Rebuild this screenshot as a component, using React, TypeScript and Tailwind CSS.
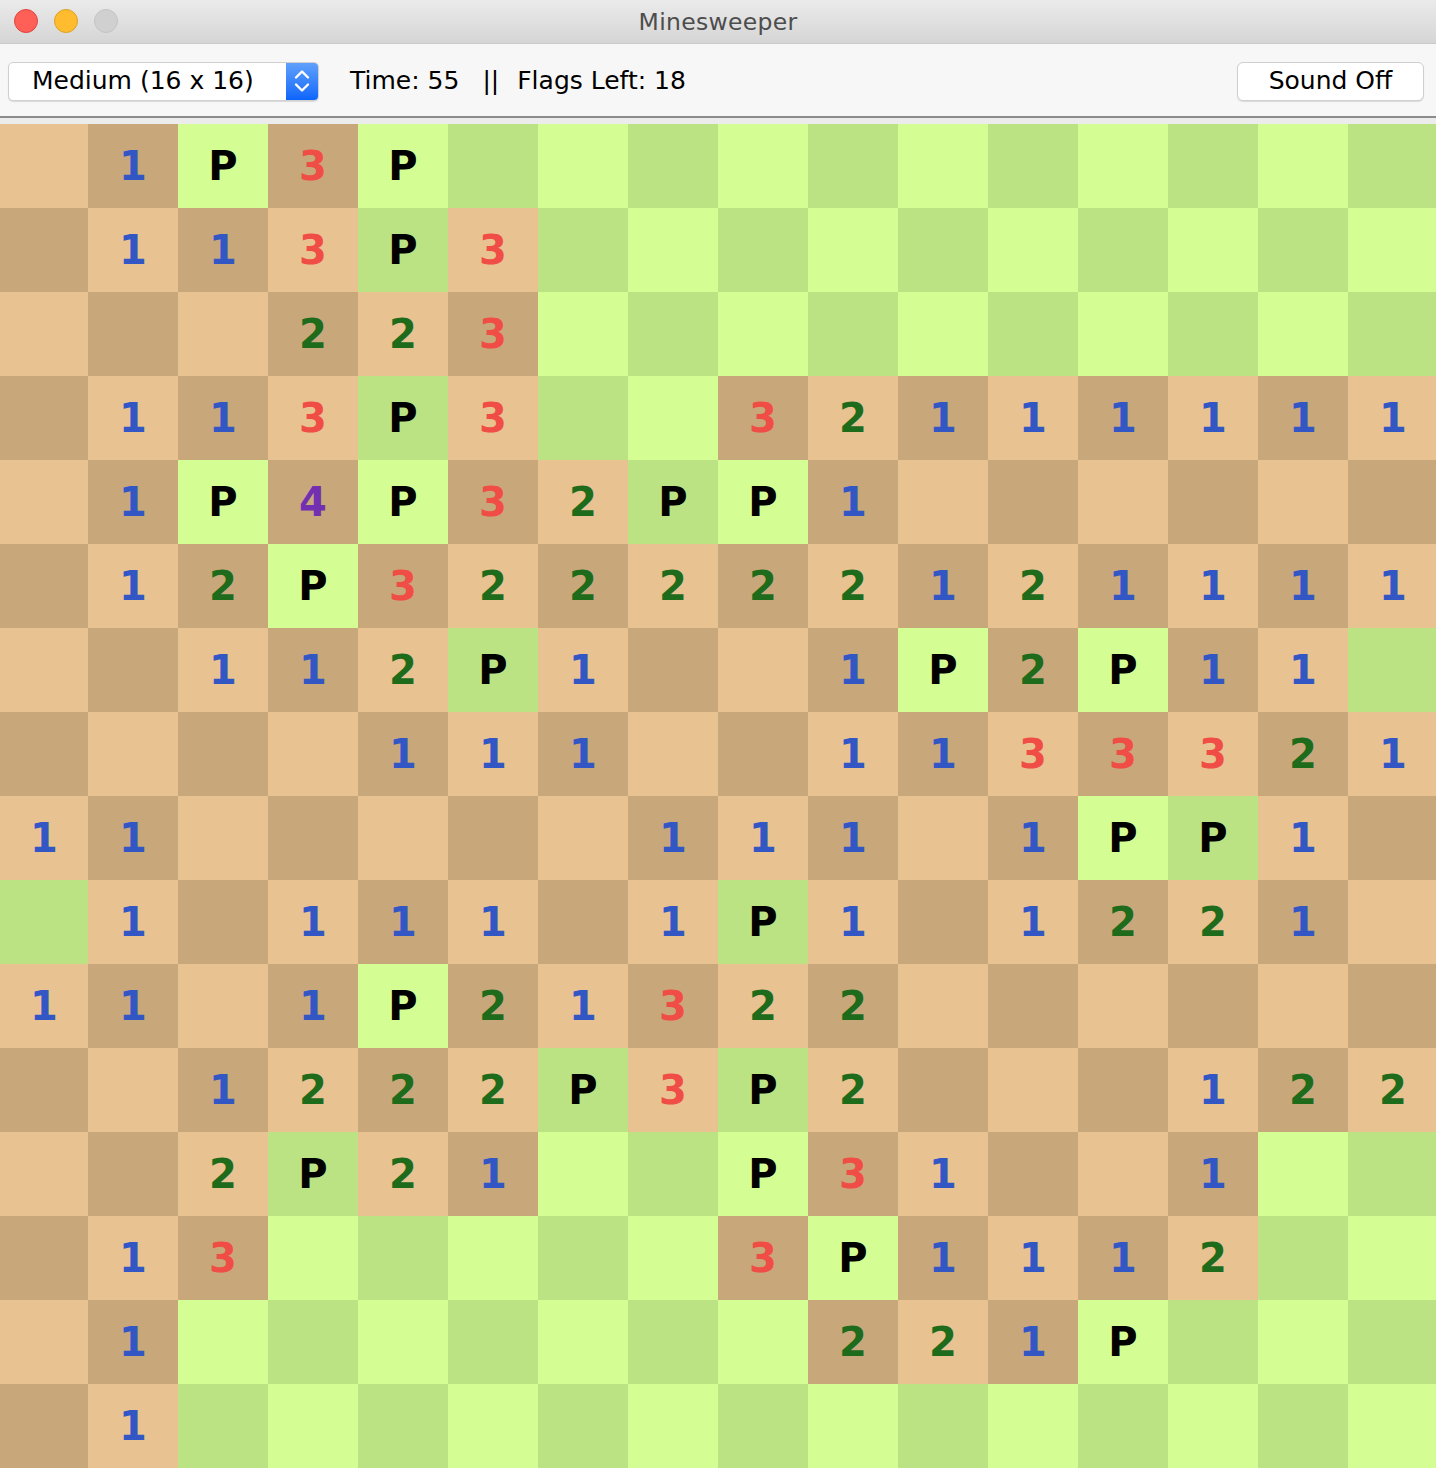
// cell codes: "." revealed empty, "#" covered, "P" flag, digit = revealed number
const board = [
  ".1P3P###########",
  ".113P3##########",
  "...223##########",
  ".113P3##32111111",
  ".1P4P32PP1......",
  ".12P322222121111",
  "..112P1..1P2P11#",
  "....111..1133321",
  "11.....111.1PP1.",
  "#1.111.1P1.1221.",
  "11.1P21322......",
  "..1222P3P2...122",
  "..2P21##P31..1##",
  ".13#####3P1112##",
  ".1#######221P###",
  ".1##############",
];

const numberColor: Record<string, string> = {
  "1": "text-[#3257c4]",
  "2": "text-[#1e6b1c]",
  "3": "text-[#ef4d45]",
  "4": "text-[#7230b0]",
};

function Cell({ code, light }: { code: string; light: boolean }) {
  const covered = code === "#" || code === "P";
  const bg = covered
    ? light
      ? "bg-[#d4fd93]"
      : "bg-[#bbe384]"
    : light
      ? "bg-[#e8c391]"
      : "bg-[#c8a87b]";

  let text = "";
  let color = "";
  if (code === "P") {
    text = "P";
    color = "text-black";
  } else if (numberColor[code]) {
    text = code;
    color = numberColor[code];
  }

  return (
    <div
      className={`flex h-[84px] items-center justify-center text-[40px] font-bold leading-none ${bg} ${color}`}
      style={{ fontFamily: '"DejaVu Sans", Verdana, sans-serif' }}
    >
      {text}
    </div>
  );
}

export default function App() {
  return (
    <div
      className="flex h-[1468px] w-[1436px] flex-col overflow-hidden bg-[#ececec]"
      style={{ fontFamily: '"DejaVu Sans", "Open Sans", sans-serif' }}
    >
      {/* title bar */}
      <div className="relative flex h-[44px] shrink-0 items-center justify-center border-b border-[#c9c9c9] bg-gradient-to-b from-[#ebebeb] to-[#d5d5d5]">
        <div className="absolute left-[14px] top-[9px] flex gap-[16px]">
          <span className="h-[24px] w-[24px] rounded-full border border-[#e0443e] bg-[#fe5f57]" />
          <span className="h-[24px] w-[24px] rounded-full border border-[#dea123] bg-[#febc2e]" />
          <span className="h-[24px] w-[24px] rounded-full border border-[#c4c4c4] bg-[#d0d0d0]" />
        </div>
        <span className="pt-[3px] text-[23.5px] tracking-[0.3px] text-[#4d4d4d]">Minesweeper</span>
      </div>

      {/* toolbar */}
      <div className="flex h-[72px] shrink-0 items-center bg-[#f7f7f7] pl-[8px] pr-[12px] pt-[2px] text-[25px] text-black">
        <div className="flex h-[39px] w-[311px] items-stretch overflow-hidden rounded-[5px] border border-[#d0d0d0] bg-white shadow-[0_1px_1px_rgba(0,0,0,0.12)]">
          <span className="flex flex-1 items-center pl-[23px]">Medium (16 x 16)</span>
          <span className="flex w-[32px] items-center justify-center bg-gradient-to-b from-[#5fa0fb] to-[#0a64fc]">
            <svg width="16" height="26" viewBox="0 0 16 26" fill="none" stroke="white" strokeWidth="2.4" strokeLinecap="round" strokeLinejoin="round">
              <path d="M2 9.5 L8 3.5 L14 9.5" />
              <path d="M2 16.5 L8 22.5 L14 16.5" />
            </svg>
          </span>
        </div>
        <div className="ml-[31px] flex items-center">
          <span>Time: 55</span>
          <span className="ml-[23px]">||</span>
          <span className="ml-[18px]">Flags Left: 18</span>
        </div>
        <div className="ml-auto flex h-[39px] w-[187px] items-center justify-center rounded-[6px] border border-[#cfcfcf] bg-white shadow-[0_1px_1px_rgba(0,0,0,0.12)]">
          Sound Off
        </div>
      </div>

      <div className="h-[2px] shrink-0 bg-[#8b8b8b]" />
      <div className="h-[6px] shrink-0 bg-[#ececec]" />

      {/* board */}
      <div className="grid grid-cols-[88px_repeat(15,90px)]">
        {board.map((row, r) =>
          row
            .split("")
            .map((code, c) => <Cell key={`${r}-${c}`} code={code} light={(r + c) % 2 === 0} />),
        )}
      </div>
    </div>
  );
}
